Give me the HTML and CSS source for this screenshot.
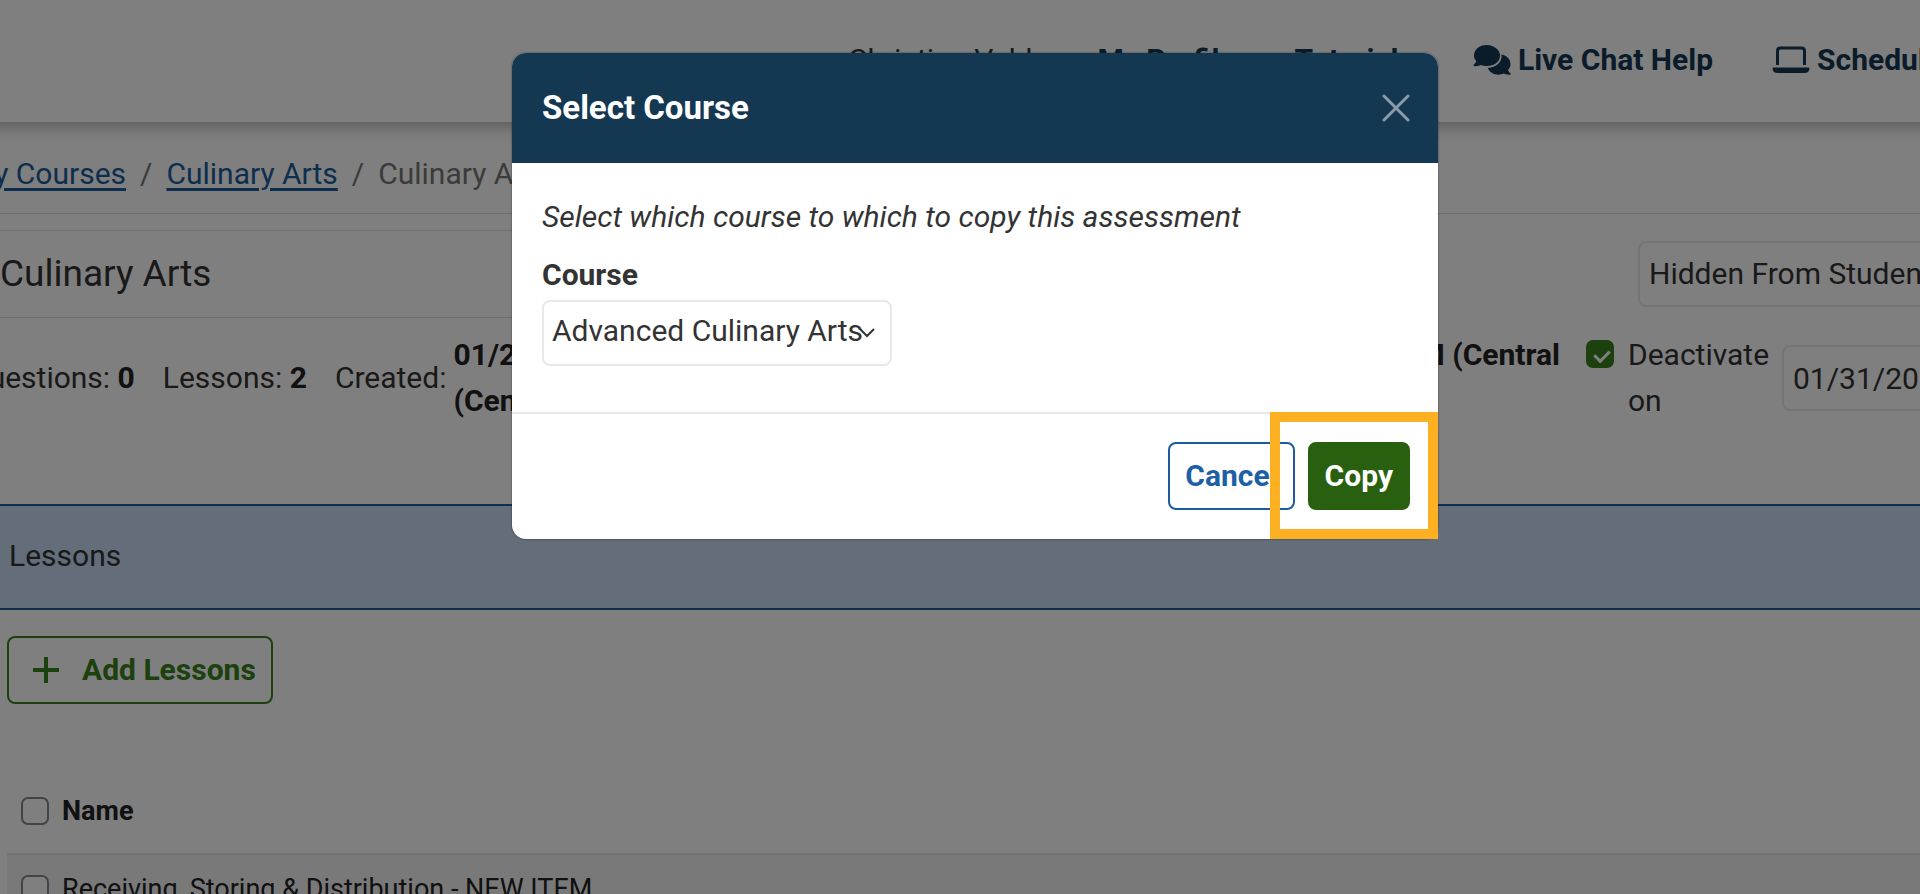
FILE: index.html
```html
<!DOCTYPE html>
<html lang="en">
<head>
    <meta charset="UTF-8">
    <meta name="viewport" content="width=device-width, initial-scale=1.0">
    <title>Select Course</title>
    <link rel="stylesheet" href="styles.css">
</head>
<body>
    <div class="app">
        <header class="topbar">
            <nav class="topnav">
                <span class="user-name">Christina Vehl</span>
                <a href="#">My Profile</a>
                <a href="#">Tutorials</a>
                <a href="#">
                    <svg class="icon-chat" viewBox="0 0 38 30" aria-hidden="true">
                        <path d="M27 10.500C27 17 21 21 13.500 21C11.500 21 9.500 20.700 7.800 20C6 21 3.500 21.500 1 21C.300 20.800 .300 20.200 .800 19.700C2 18.500 3 17.300 3.300 16C1.500 14.500 1 12.500 1 10.500C1 4.500 6.500 0 13.500 0S27 4.500 27 10.500Z"/>
                        <path d="M28.500 9.500C34 10.500 37.500 14.500 37.500 19C37.500 21.500 36.500 23.500 35 25C35.500 26.500 36.500 27.500 37.500 28.500C38 29 37.800 29.500 37 29.700C34.500 30 32.500 29.500 30.800 28.600C29 29.300 27.500 29.700 25.500 29.700C20.500 29.700 16.500 27 14.800 23C23 22.500 29.500 17 28.500 9.500Z"/>
                    </svg>
                    Live Chat Help
                </a>
                <a href="#">
                    <svg class="icon-laptop" viewBox="0 0 38 28" aria-hidden="true">
                        <path d="M5.500 19V5Q5.500 2 8.500 2H29.500Q32.500 2 32.500 5V19" fill="none" stroke="currentColor" stroke-width="3"/>
                        <path d="M1.500 21.500H36.500Q37.500 21.500 37.500 22.500Q37 27 32.500 27H5.500Q1 27 .500 22.500Q.500 21.500 1.500 21.500Z"/>
                    </svg>
                    Schedule
                </a>
            </nav>
        </header>

        <nav class="breadcrumb" aria-label="Breadcrumb">
            <a href="#">My Courses</a>
            <span>/</span>
            <a href="#">Culinary Arts</a>
            <span>/</span>
            <span>Culinary Arts</span>
        </nav>

        <div class="title-row">
            <h1 class="page-title">Culinary Arts</h1>
            <select class="field visibility" aria-label="Visibility">
                <option>Hidden From Students</option>
            </select>
        </div>

        <div class="details">
            <div>Questions: <b>0</b></div>
            <div>Lessons: <b>2</b></div>
            <div class="created">
                <span>Created:</span>
                <b>01/2<br>(Central</b>
            </div>
            <div class="deactivate">
                <b>AM (Central</b>
                <input type="checkbox" class="checkbox" id="deactivate" checked>
                <label for="deactivate">Deactivate on</label>
                <input type="text" class="field date" value="01/31/2023" aria-label="Deactivation date">
            </div>
        </div>

        <h2 class="section-title">Lessons</h2>

        <main class="lessons">
            <button type="button" class="btn btn-add">
                <svg class="icon-plus" viewBox="0 0 28 28" aria-hidden="true">
                    <path d="M14 1V27M1 14H27" stroke="currentColor" stroke-width="4"/>
                </svg>
                Add Lessons
            </button>
            <table class="lesson-table">
                <thead>
                    <tr>
                        <th class="check-cell"><input type="checkbox" class="checkbox" aria-label="Select all lessons"></th>
                        <th>Name</th>
                    </tr>
                </thead>
                <tbody>
                    <tr>
                        <td class="check-cell"><input type="checkbox" class="checkbox" id="lesson1"></td>
                        <td><label for="lesson1">Receiving, Storing &amp; Distribution - NEW ITEM</label></td>
                    </tr>
                </tbody>
            </table>
        </main>

        <div class="backdrop">
            <div class="modal" role="dialog" aria-modal="true" aria-labelledby="modal-title">
                <div class="modal-header">
                    <h2 id="modal-title">Select Course</h2>
                    <button type="button" class="close" aria-label="Close">
                        <svg viewBox="0 0 28 28" aria-hidden="true">
                            <path d="M2 2L26 26M26 2L2 26" stroke="currentColor" stroke-width="3" stroke-linecap="round"/>
                        </svg>
                    </button>
                </div>
                <div class="modal-body">
                    <p class="hint">Select which course to which to copy this assessment</p>
                    <label class="field-label" for="course">Course</label>
                    <select class="field course" id="course">
                        <option>Advanced Culinary Arts</option>
                    </select>
                </div>
                <div class="modal-footer">
                    <button type="button" class="btn btn-cancel">Cancel</button>
                    <button type="button" class="btn btn-copy">Copy</button>
                    <div class="highlight"></div>
                </div>
            </div>
        </div>
    </div>
</body>
</html>
```

FILE: styles.css
```css
* {
    box-sizing: border-box;
}

body {
    margin: 0;
    overflow: hidden;
    background-color: #fff;
    color: #333;
    font-family: Roboto, "Liberation Sans", sans-serif;
    font-size: 30px;
    line-height: 46px;
}

/* the app is a little wider than the window on both sides */
.app {
    position: relative;
    margin: 0 -62px 0 -32px;
    height: 100vh;
    overflow: hidden;
}

h1,
h2,
p {
    margin: 0;
}

button,
input,
select {
    font: inherit;
    color: inherit;
}

svg {
    display: block;
    fill: currentColor;
}

/* Top bar */
.topbar {
    padding: 37px 40px 39px;
    box-shadow: 0 4px 16px rgba(0, 0, 0, 0.3);
}

.topnav {
    display: flex;
    justify-content: flex-end;
    gap: 59px;
    white-space: nowrap;
}

.user-name {
    margin-right: 6px;
}

.topnav a {
    display: flex;
    align-items: center;
    gap: 7px;
    color: #153852;
    font-weight: bold;
    text-decoration: none;
}

.icon-chat {
    width: 38px;
    height: 30px;
}

.icon-laptop {
    width: 38px;
    height: 28px;
}

/* Breadcrumb */
.breadcrumb {
    display: flex;
    gap: 14px;
    padding: 29px 0 16px;
    border-bottom: 1px solid #ddd;
    color: #777;
    white-space: nowrap;
}

.breadcrumb a {
    color: #1c5c9c;
    text-underline-offset: 4px;
}

/* Title and details */
.title-row {
    display: flex;
    align-items: center;
    gap: 250px;
    margin-top: 16px;
}

.page-title {
    flex: 1;
    padding: 20px 32px;
    border-top: 1px solid #ddd;
    border-bottom: 1px solid #ddd;
    font-size: 37px;
    font-weight: normal;
}

.field {
    height: 66px;
    padding: 0 9px;
    border: 2px solid #e8e8e8;
    border-radius: 8px;
    background-color: #fff;
    appearance: none;
}

.visibility {
    width: 344px;
}

.details {
    display: flex;
    align-items: center;
    gap: 28px;
    padding: 14px 0 80px;
    white-space: nowrap;
}

.details b {
    color: #222;
}

.created {
    display: flex;
    align-items: center;
    gap: 7px;
}

.deactivate {
    display: flex;
    align-items: flex-start;
    gap: 26px;
    margin-left: auto;
}

.deactivate .checkbox {
    margin-top: 8px;
}

.deactivate label {
    width: 142px;
    margin-left: -12px;
    white-space: normal;
}

.date {
    width: 200px;
    align-self: center;
    margin-left: -14px;
}

.section-title {
    padding: 27px 41px 29px;
    border-top: 2px solid #1c5c9c;
    border-bottom: 2px solid #1c5c9c;
    background-color: #c6dcf4;
    font-size: 30px;
    font-weight: normal;
}

/* Lessons */
.lessons {
    padding: 26px 0 0 39px;
}

.btn {
    display: inline-flex;
    align-items: center;
    height: 68px;
    padding: 0 15px;
    border: 2px solid;
    border-radius: 8px;
    background-color: #fff;
    font-weight: bold;
    cursor: pointer;
}

.btn-add {
    gap: 22px;
    padding: 0 15px 0 23px;
    border-color: #38801c;
    color: #38801c;
}

.icon-plus {
    width: 28px;
    height: 28px;
}

.lesson-table {
    width: 100%;
    margin-top: 64px;
    border-collapse: collapse;
    font-size: 27px;
    text-align: left;
    color: #222;
}

.lesson-table th {
    padding: 20px 0 19px;
}

.lesson-table td {
    padding: 11px 0;
}

.lesson-table .check-cell {
    width: 55px;
    padding-left: 14px;
}

.lesson-table tbody tr {
    border-top: 2px solid #e4e4e4;
    background-color: #f3f3f3;
}

.checkbox {
    display: block;
    position: relative;
    flex: none;
    width: 28px;
    height: 28px;
    margin: 0;
    border: 2px solid #888;
    border-radius: 7px;
    background-color: #fff;
    appearance: none;
}

.checkbox:checked {
    border-color: #38801c;
    background-color: #38801c;
}

.checkbox:checked::after {
    content: "";
    position: absolute;
    top: 5px;
    left: 9px;
    width: 7px;
    height: 12px;
    border: solid #fff;
    border-width: 0 3px 3px 0;
    transform: rotate(45deg);
}

/* Modal */
.backdrop {
    position: absolute;
    inset: 0;
    display: flex;
    justify-content: center;
    align-items: flex-start;
    padding-top: 53px;
    background-color: rgba(0, 0, 0, 0.5);
}

.modal {
    width: 100%;
    max-width: 926px;
    border-radius: 14px;
    background-color: #fff;
    box-shadow: 0 0 2px rgba(0, 0, 0, 0.6);
}

.modal-header {
    display: flex;
    justify-content: space-between;
    align-items: center;
    padding: 32px 28px 32px 30px;
    border-radius: 14px 14px 0 0;
    background-color: #153852;
    color: #fff;
}

.modal-header h2 {
    font-size: 33px;
}

.close {
    padding: 0;
    border: none;
    background: none;
    color: #8b9ba9;
    cursor: pointer;
}

.close svg {
    width: 28px;
    height: 28px;
}

.modal-body {
    padding: 31px 30px 46px;
}

.hint {
    margin-bottom: 12px;
    font-style: italic;
}

.field-label {
    display: block;
    margin-bottom: 2px;
    font-weight: bold;
}

.course {
    display: block;
    width: 350px;
    padding: 0 0 4px 8px;
    background: #fff url("data:image/svg+xml,%3Csvg xmlns='http://www.w3.org/2000/svg' viewBox='0 0 16 10'%3E%3Cpath d='M1 1l7 7 7-7' fill='none' stroke='%23333' stroke-width='2'/%3E%3C/svg%3E") no-repeat right 15px center / 16px 10px;
}

.modal-footer {
    position: relative;
    display: flex;
    justify-content: flex-end;
    gap: 13px;
    padding: 28px 28px 29px;
    border-top: 2px solid #e8e8e8;
}

.btn-cancel {
    border-color: #1c5c9c;
    color: #1f5fa5;
}

.btn-copy {
    border-color: #28600f;
    background-color: #28600f;
    color: #fff;
}

/* frame that points out the Copy button */
.highlight {
    position: absolute;
    right: 0;
    bottom: 0;
    width: 168px;
    height: 127px;
    border: 10px solid #fdb022;
    pointer-events: none;
}
```
